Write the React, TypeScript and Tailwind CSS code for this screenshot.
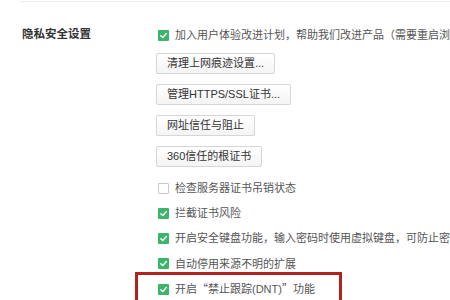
import React from "react";

function Box({ checked = true }: { checked?: boolean }) {
  if (!checked) {
    return <span className="w-[11px] h-[11px] shrink-0 border border-[#c9c9c9] bg-white rounded-[1px]" />;
  }
  return (
    <span className="w-[11px] h-[11px] shrink-0 bg-[#3bb56c] rounded-[1px] flex items-center justify-center">
      <svg width="9" height="9" viewBox="0 0 10 10" fill="none">
        <path d="M2 5.2 L4.2 7.3 L8.2 2.8" stroke="white" strokeWidth="1.6" strokeLinecap="round" strokeLinejoin="round" />
      </svg>
    </span>
  );
}

function Check({ label, checked = true }: { label: React.ReactNode; checked?: boolean }) {
  return (
    <div className="h-[20px] flex items-center gap-[6px] pl-[2px] whitespace-nowrap text-[11px] text-[#555]">
      <Box checked={checked} />
      <span>{label}</span>
    </div>
  );
}

function Btn({ children }: { children: React.ReactNode }) {
  return (
    <button
      type="button"
      className="h-[21px] px-[10px] self-start flex items-center border border-[#d6d6d6] rounded-[2px] bg-gradient-to-b from-white to-[#f4f4f4] text-[11px] text-[#333] whitespace-nowrap"
    >
      {children}
    </button>
  );
}

// full-width CJK punctuation
const Q = ({ c }: { c: string }) => (
  <span className="font-[family-name:'Noto_Sans_CJK_SC',sans-serif]">{c}</span>
);

export default function App() {
  return (
    <div className="relative w-[450px] h-[300px] overflow-hidden bg-white font-[family-name:'Liberation_Sans','Noto_Sans_CJK_SC',sans-serif]">
      {/* top divider */}
      <div className="ml-[20px] mt-[1px] h-px bg-[#ececec]" />

      <div className="flex pt-[23px]">
        {/* section label */}
        <div className="w-[156px] pl-[22px] h-[20px] flex items-center text-[11.5px] font-bold text-[#333] shrink-0">
          隐私安全设置
        </div>

        {/* options */}
        <div className="flex flex-col min-w-0">
          <Check
            label={
              <>
                加入用户体验改进计划，帮助我们改进产品
                <Q c="（" />
                需要重启浏览器
                <Q c="）" />
              </>
            }
          />

          <div className="flex flex-col gap-[10px] mt-[8px]">
            <Btn>清理上网痕迹设置...</Btn>
            <Btn>管理HTTPS/SSL证书...</Btn>
            <Btn>网址信任与阻止</Btn>
            <Btn>360信任的根证书</Btn>
          </div>

          <div className="flex flex-col gap-[5.3px] mt-[11px]">
            <Check label="检查服务器证书吊销状态" checked={false} />
            <Check label="拦截证书风险" />
            <Check label="开启安全键盘功能，输入密码时使用虚拟键盘，可防止密码被盗" />
            <Check label="自动停用来源不明的扩展" />
            <Check
              label={
                <>
                  开启
                  <Q c="“" />
                  禁止跟踪(DNT)
                  <Q c="”" />
                  功能
                </>
              }
            />
          </div>
        </div>
      </div>

      {/* red highlight annotation */}
      <div className="absolute left-[135px] top-[272px] w-[207px] h-[40px] border-[3px] border-[#b3221f]" />
    </div>
  );
}
